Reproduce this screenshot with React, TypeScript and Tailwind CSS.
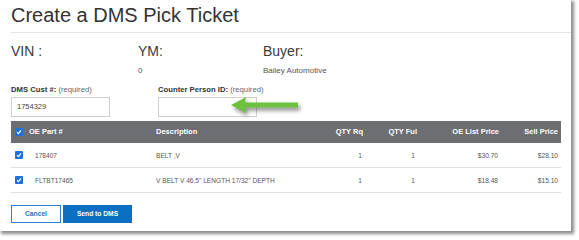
import React from 'react';

const rows = [
  { part: '178407', desc: 'BELT ,V', rq: '1', ful: '1', list: '$30.70', sell: '$28.10' },
  { part: 'FLTBT17465', desc: 'V BELT V 46.5" LENGTH 17/32" DEPTH', rq: '1', ful: '1', list: '$18.48', sell: '$15.10' },
];

const cols = 'grid grid-cols-[18px_127px_164px_43px_54px_82px_59px_3px] items-center';

function Check() {
  return (
    <span className="w-[8px] h-[8px] bg-[#1f6fdc] rounded-[1px] flex items-center justify-center ml-[4px]">
      <svg width="6" height="6" viewBox="0 0 6 6">
        <path d="M1 3.2 L2.4 4.6 L5 1.4" stroke="white" strokeWidth="1.2" fill="none" />
      </svg>
    </span>
  );
}

function Arrow() {
  return (
    <svg
      className="absolute left-[228px] top-[94px]"
      width="80"
      height="26"
      viewBox="0 0 80 26"
      style={{ filter: 'drop-shadow(2px 3px 2px rgba(0,0,0,0.45))' }}
    >
      <polygon points="3,11 18,3 17,8.5 70,8.5 70,13.5 17,13.5 18,19" fill="#6cc23c" />
    </svg>
  );
}

export default function App() {
  return (
    <div className="w-[579px] h-[240px] bg-white font-['Liberation_Sans',Arial,sans-serif] overflow-hidden">
      <div className="relative w-[571px] h-[231px] bg-white shadow-[2px_2px_3px_1px_rgba(0,0,0,0.45)]">
        <div className="ml-[11px] h-[33px] border-b border-[#e4e4e4] pt-[5px]">
          <h1 className="text-[20px] leading-none text-[#333]">Create a DMS Pick Ticket</h1>
        </div>

        <div className="ml-[11px] mt-[11px] grid grid-cols-[127px_125px_200px] text-[14px] leading-none text-[#3a3a3a]">
          <div>VIN :</div>
          <div>YM:</div>
          <div>Buyer:</div>
        </div>
        <div className="ml-[11px] mt-[9px] grid grid-cols-[127px_125px_200px] text-[8px] leading-none text-[#555]">
          <div></div>
          <div>0</div>
          <div>Bailey Automotive</div>
        </div>

        <div className="ml-[11px] mt-[11px] grid grid-cols-[147px_200px] text-[7.7px] leading-none">
          <div>
            <span className="font-bold text-[#333]">DMS Cust #:</span> <span className="text-[#666]">(required)</span>
          </div>
          <div>
            <span className="font-bold text-[#333]">Counter Person ID:</span> <span className="text-[#666]">(required)</span>
          </div>
        </div>
        <div className="ml-[11px] mt-[3px] flex gap-[48px]">
          <div className="w-[99px] h-[20px] border border-[#cfcfcf] flex items-center pl-[5px] text-[7.5px] text-[#444]">
            1754329
          </div>
          <div className="w-[99px] h-[20px] border border-[#cfcfcf]"></div>
        </div>

        <div className="ml-[11px] mt-[4px] w-[550px]">
          <div className={`${cols} h-[22px] bg-[#6d6e71] text-white font-bold text-[7.5px]`}>
            <Check />
            <div>OE Part #</div>
            <div>Description</div>
            <div className="text-right">QTY Rq</div>
            <div className="text-right">QTY Ful</div>
            <div className="text-right">OE List Price</div>
            <div className="text-right">Sell Price</div>
            <div></div>
          </div>
          {rows.map((r) => (
            <div key={r.part} className={`${cols} h-[25px] border-b border-[#e2e2e2] text-[6.6px] text-[#555]`}>
              <Check />
              <div className="pl-[6px] pt-[2px]">{r.part}</div>
              <div className="pt-[2px]">{r.desc}</div>
              <div className="text-right pr-[1px] pt-[2px]">{r.rq}</div>
              <div className="text-right pr-[2px] pt-[2px]">{r.ful}</div>
              <div className="text-right pr-[1px] pt-[2px]">{r.list}</div>
              <div className="text-right pt-[2px]">{r.sell}</div>
              <div></div>
            </div>
          ))}
        </div>

        <div className="ml-[11px] mt-[12px] flex gap-[2px] text-[6.7px] font-bold">
          <button className="w-[50px] h-[18px] border border-[#2f7fd0] text-[#1f6fc4] bg-white">Cancel</button>
          <button className="w-[69px] h-[18px] bg-[#0b6fc3] text-white">Send to DMS</button>
        </div>

        <Arrow />
      </div>
    </div>
  );
}
